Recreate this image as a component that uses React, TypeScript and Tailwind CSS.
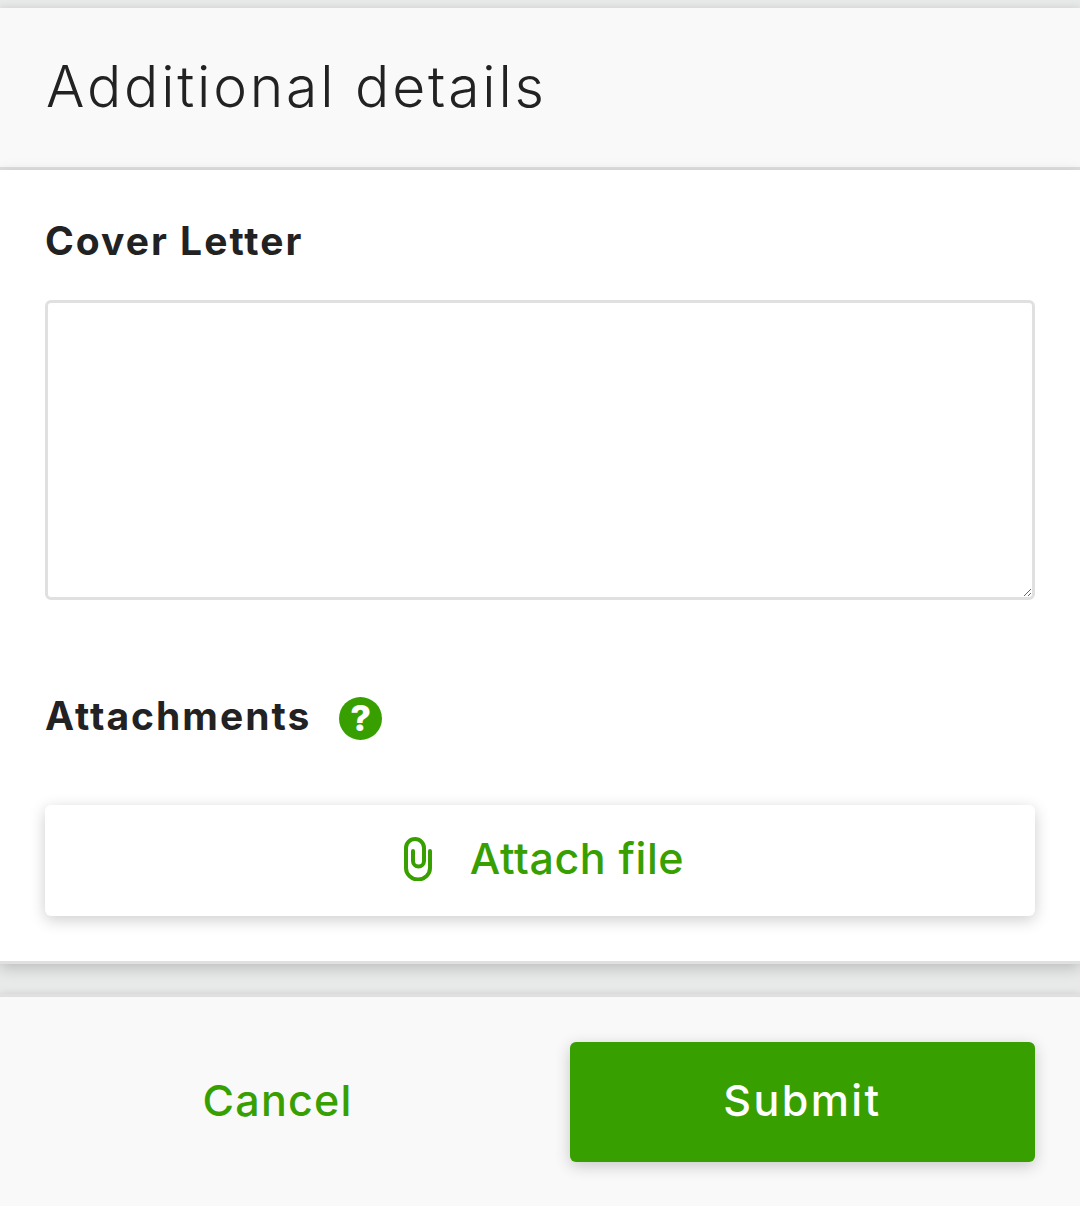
export default function App() {
  return (
    <div className="min-h-[1206px] bg-[#e8e9e9] pt-2 font-['Inter','Liberation_Sans',sans-serif] text-[#222222]">
      {/* header */}
      <div className="relative h-[162px] border-b-[3px] border-[#e0e0e0] bg-[#f9f9f9] pl-[46px] pt-[44px] shadow-[0_0_8px_rgba(0,0,0,0.12)]">
        <h1 className="text-[57px] leading-[70px] font-light tracking-[2.8px]">Additional details</h1>
      </div>

      {/* form body */}
      <div className="relative h-[794px] border-b-[3px] border-[#e0e0e0] bg-white px-[45px] pt-[46px] shadow-[0_4px_14px_rgba(0,0,0,0.2)]">
        <label className="block text-[39px] leading-[50px] font-bold tracking-[2px]">Cover Letter</label>
        <textarea className="mt-[34px] block h-[300px] w-full rounded-[6px] border-[3px] border-[#e0e0e0] bg-white" />

        <div className="mt-[91px] flex items-center">
          <span className="text-[39px] leading-[50px] font-bold tracking-[2px]">Attachments</span>
          <span className="mt-[4px] ml-[28px] flex h-[43px] w-[43px] items-center justify-center rounded-full bg-[#37a000] text-[36px] leading-none font-extrabold text-white">?</span>
        </div>

        <button className="mt-[64px] flex h-[111px] w-full items-center justify-center rounded-[6px] bg-white pb-[4px] pl-[8px] text-[43px] font-medium tracking-[0.6px] text-[#37a000] shadow-[0_4px_16px_rgba(0,0,0,0.2)]">
          <svg className="mr-[38px]" width="28" height="44" viewBox="0 0 28 44" fill="none" stroke="#37a000" strokeWidth="4" strokeLinecap="round">
            <path d="M26 14v17a12 11.5 0 0 1-24 0V11a9 9 0 0 1 18 0v13a5.5 5.5 0 0 1-11 0V14" />
          </svg>
          Attach file
        </button>
      </div>

      {/* footer */}
      <div className="relative mt-[30px] flex h-[212px] items-start border-t-[3px] border-[#e0e0e0] bg-[#f9f9f9] pt-[45px] pr-[45px] shadow-[0_0_8px_rgba(0,0,0,0.12)]">
        <button className="h-[120px] w-[555px] pb-[4px] text-[43px] font-medium tracking-[1.2px] text-[#37a000]">Cancel</button>
        <button className="ml-auto h-[120px] w-[465px] rounded-[6px] bg-[#37a000] pb-[4px] text-[43px] font-medium tracking-[2.4px] text-white shadow-[0_4px_16px_rgba(0,0,0,0.2)]">Submit</button>
      </div>
    </div>
  )
}
